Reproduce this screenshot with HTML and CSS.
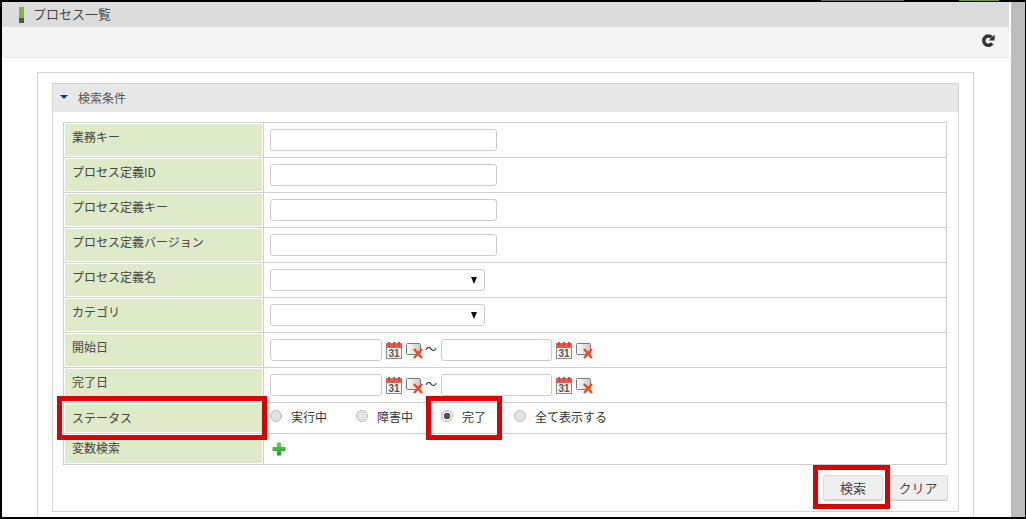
FILE: index.html
```html
<!DOCTYPE html>
<html lang="ja">
<head>
<meta charset="utf-8">
<title>プロセス一覧</title>
<link rel="stylesheet" href="styles.css">
</head>
<body>
<svg class="defs" aria-hidden="true">
  <symbol id="clr" viewBox="0 0 17 16">
    <defs><linearGradient id="clrg" x1="0" x2="1"><stop offset="0" stop-color="#fff"/><stop offset="1" stop-color="#c8c8c8"/></linearGradient></defs>
    <rect x="0.500" y="0.500" width="14" height="11" rx="1" fill="url(#clrg)" stroke="#7a7a7a"/>
    <path d="M8 6l8 9M16 6l-8 9" stroke="#ee4a1c" stroke-width="2.400"/>
  </symbol>
</svg>
<div class="top-strip"><span class="tab-grey"></span><span class="tab-green"></span></div>
<div class="frame">
  <main class="page">
    <header class="title-bar"><span class="mark"></span><h1>プロセス一覧</h1></header>
    <div class="tool-bar">
      <svg class="refresh" width="14" height="14" viewBox="0 0 14 14"><path d="M11.200 9.200A4.600 4.600 0 1 1 10.600 3.400" fill="none" stroke="#333" stroke-width="3.400"/><path d="M13.600 .6V6.600H7.600Z" fill="#333"/></svg>
    </div>
    <div class="content">
      <section class="outer">
        <div class="panel">
          <div class="panel-head"><span class="caret"></span><span>検索条件</span></div>
          <div class="panel-body">
            <table class="form">
              <tr><th>業務キー</th><td><input class="txt"></td></tr>
              <tr><th>プロセス定義ID</th><td><input class="txt"></td></tr>
              <tr><th>プロセス定義キー</th><td><input class="txt"></td></tr>
              <tr><th>プロセス定義バージョン</th><td><input class="txt"></td></tr>
              <tr><th>プロセス定義名</th><td><span class="sel"><select></select></span></td></tr>
              <tr><th>カテゴリ</th><td><span class="sel"><select></select></span></td></tr>
              <tr><th>開始日</th><td><div class="dates"><input class="date"><svg class="i-cal" viewBox="0 0 16 17"><rect x=".5" y="1.500" width="15" height="15" fill="#f6f6f6" stroke="#8a8a8a"/><rect y="2" width="16" height="4" fill="#ea5a4c"/><path d="M3 0v4M8 0v4M13 0v4" stroke="#d9483c" stroke-width="2"/><text x="8" y="15" text-anchor="middle" class="cal-num">31</text></svg><svg class="i-clr"><use href="#clr"/></svg><span class="tilde">～</span><input class="date date2"><svg class="i-cal" viewBox="0 0 16 17"><rect x=".5" y="1.500" width="15" height="15" fill="#f6f6f6" stroke="#8a8a8a"/><rect y="2" width="16" height="4" fill="#ea5a4c"/><path d="M3 0v4M8 0v4M13 0v4" stroke="#d9483c" stroke-width="2"/><text x="8" y="15" text-anchor="middle" class="cal-num">31</text></svg><svg class="i-clr"><use href="#clr"/></svg></div></td></tr>
              <tr><th>完了日</th><td><div class="dates"><input class="date"><svg class="i-cal" viewBox="0 0 16 17"><rect x=".5" y="1.500" width="15" height="15" fill="#f6f6f6" stroke="#8a8a8a"/><rect y="2" width="16" height="4" fill="#ea5a4c"/><path d="M3 0v4M8 0v4M13 0v4" stroke="#d9483c" stroke-width="2"/><text x="8" y="15" text-anchor="middle" class="cal-num">31</text></svg><svg class="i-clr"><use href="#clr"/></svg><span class="tilde">～</span><input class="date date2"><svg class="i-cal" viewBox="0 0 16 17"><rect x=".5" y="1.500" width="15" height="15" fill="#f6f6f6" stroke="#8a8a8a"/><rect y="2" width="16" height="4" fill="#ea5a4c"/><path d="M3 0v4M8 0v4M13 0v4" stroke="#d9483c" stroke-width="2"/><text x="8" y="15" text-anchor="middle" class="cal-num">31</text></svg><svg class="i-clr"><use href="#clr"/></svg></div></td></tr>
              <tr class="short st"><th>ステータス</th><td>
                <div class="radios">
                  <label class="r1"><input type="radio" name="st"><span>実行中</span></label>
                  <label class="r2"><input type="radio" name="st"><span>障害中</span></label>
                  <label class="r3"><input type="radio" name="st" checked><span>完了</span></label>
                  <label><input type="radio" name="st"><span>全て表示する</span></label>
                </div>
              </td></tr>
              <tr class="short vr"><th>変数検索</th><td>
                <svg class="plus" width="14" height="14" viewBox="0 0 14 14"><defs><linearGradient id="pg" x2="0" y2="1"><stop offset="0" stop-color="#6cd05a"/><stop offset="1" stop-color="#1f9a2c"/></linearGradient></defs><path d="M5 .5h4v4.500h4.500v4H9v4.500H5V9H.5V5H5Z" fill="url(#pg)"/></svg>
              </td></tr>
            </table>
            <div class="actions"><button class="btn">検索</button><button class="btn">クリア</button></div>
          </div>
        </div>
      </section>
    </div>
    <span class="mark-box b1"></span><span class="mark-box b2"></span><span class="mark-box b3"></span>
  </main>
  <div class="scroll"></div>
</div>
</body>
</html>
```
FILE: styles.css
```css
* { box-sizing: border-box; }
html, body { margin: 0; height: 519px; overflow: hidden; background: #000; }
body { font-family: "Noto Sans CJK JP", "Noto Sans", sans-serif; font-size: 13px; color: #333; display: flex; flex-direction: column; }
.defs { position: absolute; width: 0; height: 0; overflow: hidden; }
.cal-num { font: bold 10px "Liberation Sans", sans-serif; fill: #555; }
.top-strip { height: 2px; flex: none; position: relative; }
.tab-grey, .tab-green { position: absolute; top: 0; height: 1px; }
.tab-grey { left: 821px; width: 83px; background: #666; }
.tab-green { left: 959px; width: 40px; background: #6f9a3a; }
.frame { flex: none; height: 515px; display: flex; padding-left: 2px; }
.page { position: relative; width: 1009px; height: 515px; background: #fff; overflow: hidden; flex: none; }
.scroll { width: 14px; background: #bdbdbd; flex: none; }
.title-bar { height: 25px; margin-right: 2px; background: #dcdcdc; display: flex; align-items: center; padding-left: 17px; }
.mark { width: 5px; height: 16px; background: linear-gradient(#8cb04c 0 11px, #4f5a48 11px); margin-right: 9px; }
h1 { margin: 0; font-size: 13px; font-weight: 400; color: #444; position: relative; top: -1px; }
.tool-bar { height: 31px; margin-right: 2px; background: #f4f4f4; border-bottom: 1px solid #ebebeb; display: flex; justify-content: flex-end; align-items: center; padding-right: 14px; }
.refresh { margin-top: -3px; }
.content { padding: 14px 35px 0; }
.outer { width: 937px; height: 460px; border: 1px solid #d4d4d4; border-bottom: 0; padding: 10px 14px 0; }
.panel { width: 907px; height: 429px; border: 1px solid #d4d4d4; }
.panel-head { height: 28px; background: #e8e8e8; display: flex; align-items: center; padding: 0 0 2px 7px; font-size: 12px; color: #555; }
.caret { width: 0; height: 0; border: 4px solid transparent; border-top: 4px solid #12406e; border-bottom: 0; margin-right: 10px; }
.panel-body { padding: 10px 10px 0; }
.form { width: 884px; border-collapse: collapse; table-layout: fixed; }
.form th, .form td { border: 1px solid #d0d0d0; height: 35px; padding: 0; }
.form tr.short th, .form tr.short td { height: 31px; }
.form th { width: 200px; background: #deeac8; background-clip: padding-box; box-shadow: inset 0 0 0 1px #fff; text-align: left; font-weight: 400; font-size: 12px; color: #444; padding: 0 0 7px 8px; }
.form tr.st th { padding-bottom: 1px; }
.form tr.vr th { padding-bottom: 3px; }
.form td { padding-left: 6px; }
input.txt { display: block; width: 227px; height: 22px; }
input.txt, input.date { border: 1px solid #ccc; border-radius: 3px; background: #fff; padding: 0; outline: 0; }
.sel { display: block; position: relative; width: 215px; height: 22px; }
.sel select { appearance: none; display: block; width: 100%; height: 100%; border: 1px solid #ccc; border-radius: 3px; background: #fff; padding: 0; }
.sel::after { content: ""; position: absolute; right: 8px; top: 8px; border: 3.500px solid transparent; border-top: 7px solid #111; border-bottom: 0; }
.dates { display: flex; align-items: center; }
input.date { width: 112px; height: 22px; }
input.date2 { width: 111px; }
.i-cal { width: 16px; height: 17px; margin-left: 4px; }
.i-clr { width: 17px; height: 16px; margin-left: 4px; margin-top: 2px; }
.tilde { width: 18px; padding-left: 2px; font-size: 12px; color: #333; margin-top: -4px; }
.radios { display: flex; font-size: 12px; color: #333; margin-top: -4px; }
.radios label { display: flex; align-items: center; }
.radios input { appearance: none; width: 12px; height: 12px; margin: 0 9px 0 0; border: 1px solid #bbb; border-radius: 50%; background: #e4e4e4; }
.radios input:checked { background: radial-gradient(circle, #555 0 3px, #e8e8e8 3.500px); }
.r1 { margin-right: 29px; }
.r2 { margin-right: 28px; }
.r3 { margin-right: 28px; }
.plus { display: block; margin-left: 2px; }
.actions { display: flex; justify-content: flex-end; gap: 5px; margin-top: 10px; }
.btn { height: 25px; width: 60px; border: 1px solid #dcdcdc; border-radius: 2px; background: #efefef; font: inherit; font-size: 13px; color: #444; padding: 0; box-shadow: 0 1px 1px #ccc; }
.mark-box { position: absolute; border: 5px solid #dc0000; }
.b1 { left: 55px; top: 394px; width: 210px; height: 44px; }
.b2 { left: 424px; top: 394px; width: 76px; height: 44px; }
.b3 { left: 811px; top: 463px; width: 77px; height: 44px; }
```
